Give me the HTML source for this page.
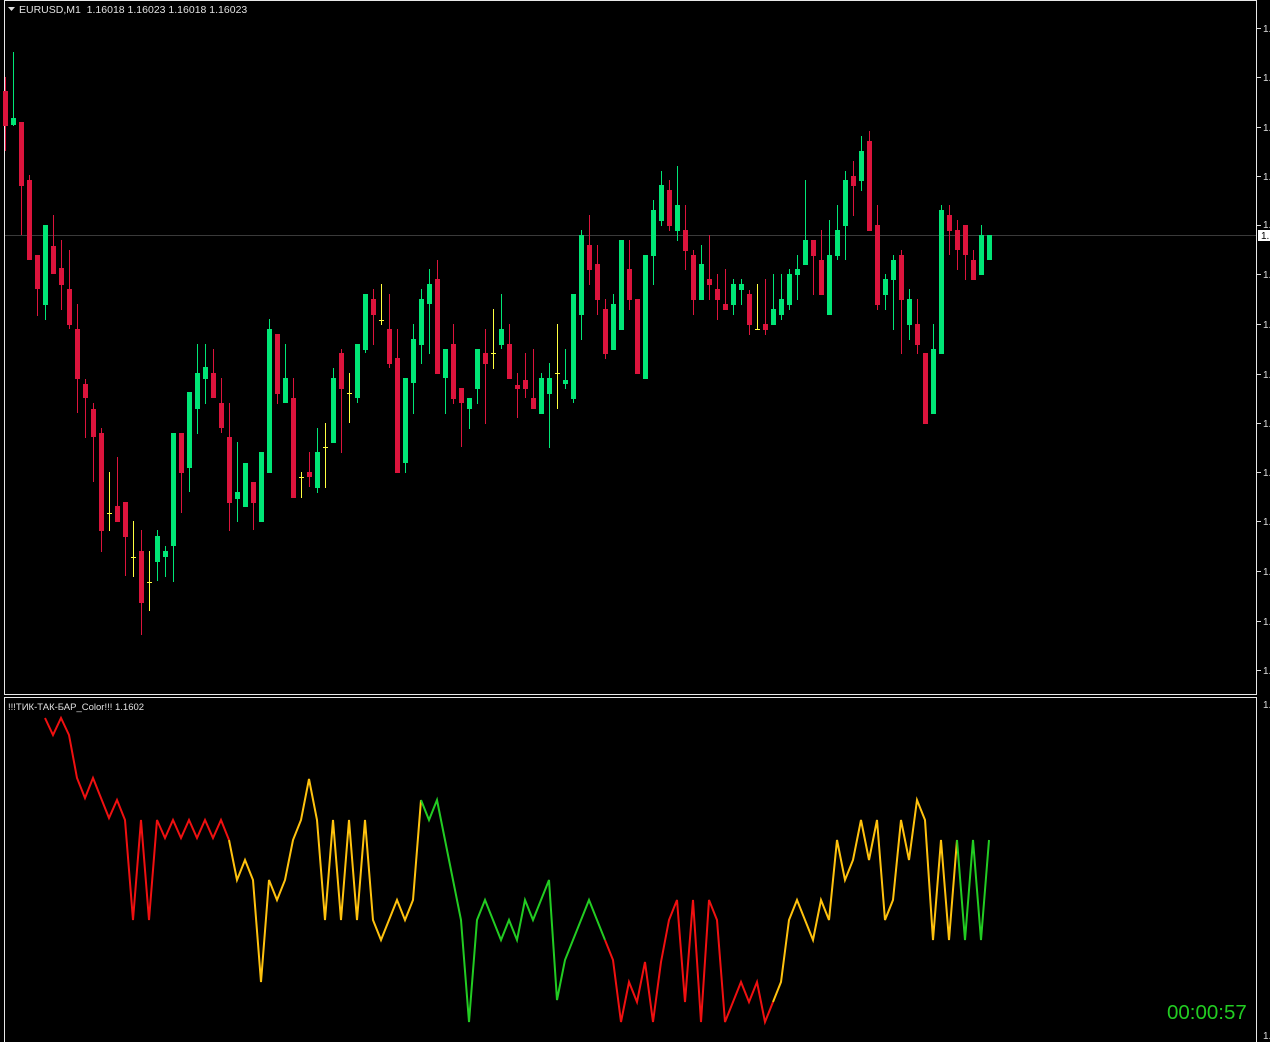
<!DOCTYPE html>
<html><head><meta charset="utf-8"><style>
html,body{margin:0;padding:0;background:#000;width:1270px;height:1042px;overflow:hidden}
svg{display:block}
text{font-family:"Liberation Sans",sans-serif}
</style></head><body>
<svg width="1270" height="1042" viewBox="0 0 1270 1042" xmlns="http://www.w3.org/2000/svg">
<rect width="1270" height="1042" fill="#000"/>
<rect x="4.5" y="0.5" width="1252" height="694" fill="none" stroke="#e8e8e8"/>
<rect x="4.5" y="697.5" width="1252" height="346" fill="none" stroke="#e8e8e8"/>
<line x1="5" y1="235.5" x2="1256" y2="235.5" stroke="#3a3a3a"/>
<g stroke="#ddd">
<path d="M1257 28.5h4M1257 77.5h4M1257 127.5h4M1257 176.5h4M1257 225.5h4M1257 274.5h4M1257 324.5h4M1257 374.5h4M1257 423.5h4M1257 472.5h4M1257 521.5h4M1257 571.5h4M1257 621.5h4M1257 670.5h4"/>
</g>
<g fill="#ddd" font-size="10">
<text x="1263" y="32">1.</text><text x="1263" y="81">1.</text><text x="1263" y="131">1.</text><text x="1263" y="180">1.</text><text x="1263" y="228">1.</text><text x="1263" y="278">1.</text><text x="1263" y="328">1.</text><text x="1263" y="378">1.</text><text x="1263" y="427">1.</text><text x="1263" y="476">1.</text><text x="1263" y="525">1.</text><text x="1263" y="575">1.</text><text x="1263" y="625">1.</text><text x="1263" y="674">1.</text>
<text x="1263" y="708">1.1</text><text x="1263" y="1039">1.1</text>
</g>
<rect x="1258" y="230" width="12" height="11" fill="#fff"/>
<text x="1261" y="239" font-size="10" fill="#000">1.</text>
<path d="M8 7h7l-3.5 4z" fill="#ddd"/>
<text x="19" y="13" font-size="10.5" fill="#e0e0e0" xml:space="preserve">EURUSD,M1  1.16018 1.16023 1.16018 1.16023</text>
<text x="8" y="710" font-size="9.5" fill="#e0e0e0">!!!ТИК-ТАК-БАР_Color!!! 1.1602</text>
<g stroke="#dc143c" stroke-width="1" fill="none">
<path d="M5.5 77V151M21.5 122V235M29.5 175V260M37.5 255V316M53.5 215V274M61.5 240V310M69.5 250V329M77.5 304V413M85.5 379V438M93.5 403V482M101.5 428V552M117.5 457V522M125.5 502V576M141.5 530V635M181.5 433V513M213.5 349V398M221.5 378V433M229.5 403V531M253.5 482V530M277.5 334V404M293.5 378V498M309.5 452V487M341.5 349V453M373.5 289V345M389.5 294V368M397.5 329V473M437.5 260V374M453.5 324V404M461.5 388V447M485.5 329V424M509.5 324V379M517.5 373V418M525.5 353V398M533.5 349V409M589.5 215V285M597.5 245V315M605.5 299V359M629.5 240V310M637.5 299V374M669.5 180V231M685.5 205V270M693.5 250V315M709.5 235V300M717.5 274V320M725.5 269V310M749.5 290V335M765.5 279V335M813.5 240V295M821.5 230V295M853.5 161V216M869.5 131V231M877.5 205V310M901.5 250V354M917.5 299V354M925.5 353V424M949.5 205V255M957.5 220V270M965.5 225V280M973.5 250V280"/>
</g>
<g fill="#dc143c">
<rect x="3" y="91" width="5" height="35"/><rect x="19" y="122" width="5" height="64"/><rect x="27" y="180" width="5" height="80"/><rect x="35" y="255" width="5" height="34"/><rect x="51" y="246" width="5" height="28"/><rect x="59" y="268" width="5" height="17"/><rect x="67" y="289" width="5" height="36"/><rect x="75" y="329" width="5" height="50"/><rect x="83" y="384" width="5" height="14"/><rect x="91" y="409" width="5" height="28"/><rect x="99" y="433" width="5" height="98"/><rect x="115" y="506" width="5" height="16"/><rect x="123" y="502" width="5" height="35"/><rect x="139" y="551" width="5" height="52"/><rect x="179" y="433" width="5" height="40"/><rect x="211" y="373" width="5" height="25"/><rect x="219" y="403" width="5" height="25"/><rect x="227" y="437" width="5" height="66"/><rect x="251" y="482" width="5" height="21"/><rect x="275" y="334" width="5" height="60"/><rect x="291" y="398" width="5" height="100"/><rect x="307" y="472" width="5" height="5"/><rect x="339" y="353" width="5" height="36"/><rect x="371" y="299" width="5" height="16"/><rect x="387" y="329" width="5" height="35"/><rect x="395" y="358" width="5" height="115"/><rect x="435" y="279" width="5" height="95"/><rect x="451" y="344" width="5" height="55"/><rect x="459" y="388" width="5" height="15"/><rect x="483" y="353" width="5" height="11"/><rect x="507" y="344" width="5" height="35"/><rect x="515" y="385" width="5" height="4"/><rect x="523" y="380" width="5" height="9"/><rect x="531" y="398" width="5" height="11"/><rect x="587" y="245" width="5" height="25"/><rect x="595" y="264" width="5" height="36"/><rect x="603" y="309" width="5" height="45"/><rect x="627" y="269" width="5" height="31"/><rect x="635" y="299" width="5" height="75"/><rect x="667" y="190" width="5" height="36"/><rect x="683" y="230" width="5" height="21"/><rect x="691" y="255" width="5" height="45"/><rect x="707" y="279" width="5" height="6"/><rect x="715" y="289" width="5" height="11"/><rect x="723" y="304" width="5" height="6"/><rect x="747" y="294" width="5" height="31"/><rect x="763" y="324" width="5" height="6"/><rect x="811" y="240" width="5" height="16"/><rect x="819" y="260" width="5" height="35"/><rect x="851" y="176" width="5" height="10"/><rect x="867" y="141" width="5" height="90"/><rect x="875" y="225" width="5" height="80"/><rect x="899" y="255" width="5" height="45"/><rect x="915" y="324" width="5" height="21"/><rect x="923" y="353" width="5" height="71"/><rect x="947" y="215" width="5" height="16"/><rect x="955" y="230" width="5" height="20"/><rect x="963" y="225" width="5" height="30"/><rect x="971" y="260" width="5" height="20"/>
</g>
<g stroke="#00e676" stroke-width="1" fill="none">
<path d="M13.5 52V126M45.5 225V320M157.5 530V581M165.5 546V577M173.5 433V582M189.5 392V492M197.5 344V434M205.5 344V404M237.5 442V522M245.5 463V507M261.5 452V522M269.5 319V473M285.5 344V403M317.5 428V493M333.5 368V443M357.5 344V403M365.5 294V353M405.5 378V473M413.5 324V414M421.5 289V364M429.5 269V354M445.5 349V414M469.5 398V429M477.5 349V404M501.5 294V349M541.5 373V414M549.5 363V448M565.5 349V389M573.5 294V403M581.5 230V340M613.5 294V350M621.5 240V330M645.5 255V379M653.5 200V285M661.5 171V226M677.5 166V241M701.5 245V300M733.5 279V315M741.5 279V305M773.5 274V325M781.5 274V320M789.5 269V310M797.5 255V300M805.5 180V265M829.5 220V315M837.5 205V260M845.5 171V260M861.5 136V191M885.5 274V310M893.5 255V330M909.5 289V340M933.5 324V414M941.5 205V354M981.5 225V275M989.5 235V260"/>
</g>
<g fill="#00e676">
<rect x="11" y="118" width="5" height="7"/><rect x="43" y="225" width="5" height="80"/><rect x="155" y="536" width="5" height="26"/><rect x="163" y="551" width="5" height="6"/><rect x="171" y="433" width="5" height="113"/><rect x="187" y="392" width="5" height="76"/><rect x="195" y="373" width="5" height="36"/><rect x="203" y="367" width="5" height="12"/><rect x="235" y="492" width="5" height="7"/><rect x="243" y="463" width="5" height="44"/><rect x="259" y="452" width="5" height="70"/><rect x="267" y="329" width="5" height="144"/><rect x="283" y="378" width="5" height="25"/><rect x="315" y="452" width="5" height="36"/><rect x="331" y="378" width="5" height="65"/><rect x="355" y="344" width="5" height="54"/><rect x="363" y="294" width="5" height="56"/><rect x="403" y="378" width="5" height="85"/><rect x="411" y="339" width="5" height="44"/><rect x="419" y="299" width="5" height="46"/><rect x="427" y="284" width="5" height="20"/><rect x="443" y="349" width="5" height="29"/><rect x="467" y="398" width="5" height="11"/><rect x="475" y="349" width="5" height="40"/><rect x="499" y="329" width="5" height="16"/><rect x="539" y="378" width="5" height="36"/><rect x="547" y="378" width="5" height="16"/><rect x="563" y="380" width="5" height="4"/><rect x="571" y="294" width="5" height="105"/><rect x="579" y="235" width="5" height="80"/><rect x="611" y="304" width="5" height="46"/><rect x="619" y="240" width="5" height="90"/><rect x="643" y="255" width="5" height="124"/><rect x="651" y="210" width="5" height="46"/><rect x="659" y="185" width="5" height="36"/><rect x="675" y="205" width="5" height="26"/><rect x="699" y="264" width="5" height="36"/><rect x="731" y="284" width="5" height="21"/><rect x="739" y="284" width="5" height="6"/><rect x="771" y="309" width="5" height="16"/><rect x="779" y="299" width="5" height="16"/><rect x="787" y="274" width="5" height="31"/><rect x="795" y="269" width="5" height="6"/><rect x="803" y="240" width="5" height="25"/><rect x="827" y="255" width="5" height="60"/><rect x="835" y="230" width="5" height="26"/><rect x="843" y="180" width="5" height="46"/><rect x="859" y="151" width="5" height="30"/><rect x="883" y="279" width="5" height="16"/><rect x="891" y="260" width="5" height="20"/><rect x="907" y="299" width="5" height="26"/><rect x="931" y="349" width="5" height="65"/><rect x="939" y="210" width="5" height="144"/><rect x="979" y="235" width="5" height="40"/><rect x="987" y="235" width="5" height="25"/>
</g>
<g stroke="#ffff40" stroke-width="1">
<path d="M109.5 472V531M107 513.5h5M133.5 521V577M131 557.5h5M149.5 551V611M147 582.5h5M301.5 472V498M299 477.5h5M325.5 423V488M323 447.5h5M349.5 373V423M347 393.5h5M381.5 284V325M379 320.5h5M493.5 309V369M491 353.5h5M557.5 324V409M555 373.5h5M757.5 284V329M755 329.5h5"/>
</g>
<g fill="none" stroke-width="2" stroke-linejoin="miter">
<polyline stroke="#f01010" points="45,718 53,735 61,718 69,735 77,778 85,798 93,778 101,798 109,818 117,800 125,820 133,920 141,820 149,920 157,820 165,838 173,820 181,838 189,820 197,838 205,820 213,838 221,820 229,840"/>
<polyline stroke="#ffc20e" points="229,840 237,880 245,860 253,880 261,982 269,880 277,900 285,880 293,840 301,820 309,779 317,820 325,920 333,820 341,920 349,820 357,920 365,820 373,920 381,940 389,920 397,900 405,920 413,900 421,800"/>
<polyline stroke="#22cc22" points="421,800 429,820 437,800 445,840 453,880 461,920 469,1022 477,920 485,900 493,920 501,940 509,920 517,940 525,900 533,920 541,900 549,880 557,1000 565,960 573,940 581,920 589,900 597,920 605,940"/>
<polyline stroke="#f01010" points="605,940 613,960 621,1022 629,982 637,1002 645,962 653,1022 661,962 669,920 677,900 685,1002 693,900 701,1022 709,900 717,920 725,1022 733,1002 741,982 749,1002 757,982 765,1022 773,1002"/>
<polyline stroke="#ffc20e" points="773,1002 781,982 789,920 797,900 805,920 813,940 821,900 829,920 837,840 845,880 853,860 861,820 869,860 877,820 885,920 893,900 901,820 909,860 917,800 925,820 933,940 941,840 949,940 957,840"/>
<polyline stroke="#22cc22" points="957,840 965,940 973,840 981,940 989,840"/>
</g>
<text x="1167" y="1019" font-size="20.5" fill="#22cc22">00:00:57</text>
</svg>
</body></html>
